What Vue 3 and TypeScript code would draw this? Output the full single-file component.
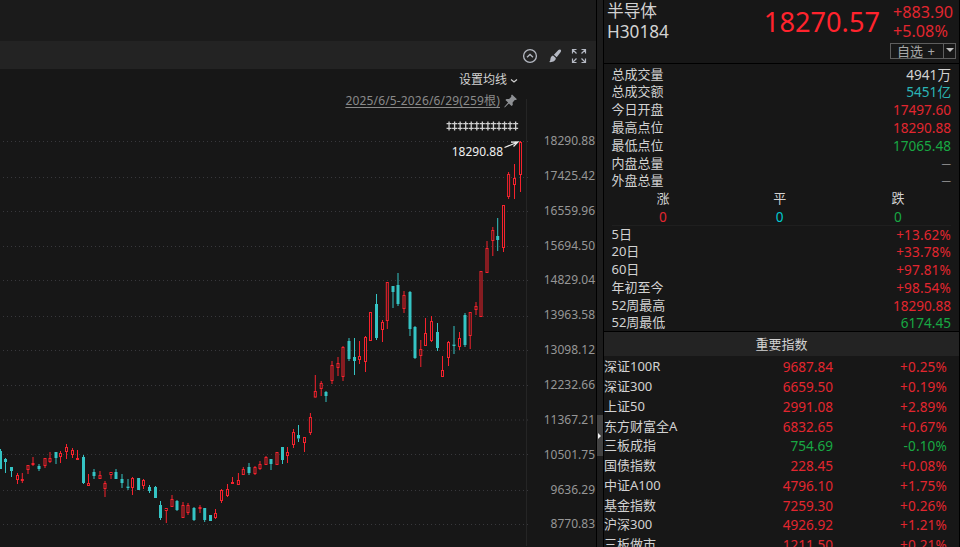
<template>
  <div class="terminal">
    <section class="chart">
      <div class="chart-top"></div>
      <div class="toolbar">
        <svg class="tool" width="16" height="16" viewBox="0 0 16 16">
          <circle cx="8" cy="8" r="6.4" />
          <path d="M5 9.2 8 6.4l3 2.8" />
        </svg>
        <svg class="tool brush" width="16" height="16" viewBox="0 0 16 16">
          <path d="M13.2 1.500c1.200.6 1.100 1.600.5 2.500L9.700 9.200 6.900 6.700l4.500-4.600c.6-.6 1.200-.9 1.800-.6z" />
          <path d="M6 7.500 8.800 10c.2 2.600-2.800 4.500-6.800 4.100 1.200-.7 1.200-1.700 1.400-3.200C3.600 9.200 4.500 7.800 6 7.500z" />
        </svg>
        <svg class="tool corners" width="16" height="16" viewBox="0 0 16 16">
          <path d="M1.500 5.500v-4h4M1.500 1.500l4 4M10.500 1.500h4v4M14.500 1.500l-4 4M1.500 10.500v4h4M1.500 14.500l4-4M10.500 14.500h4v-4M14.500 14.500l-4-4" />
        </svg>
      </div>
      <div class="plot">
        <svg class="candles" width="596" height="478" viewBox="0 69 596 478">
          <line v-for="tick in ticks" :key="tick.y" class="grid" x1="3" x2="530" :y1="tick.y" :y2="tick.y" />
          <line class="edge" x1="526.5" x2="526.5" y1="99" y2="546" />
          <g v-for="c in candles" :key="c[0]" :class="c[5] ? 'up' : 'down'">
            <line v-if="c[1] < c[2]" :x1="c[0]" :x2="c[0]" :y1="c[1]" :y2="c[2]" />
            <line v-if="c[4] > c[3]" :x1="c[0]" :x2="c[0]" :y1="c[3]" :y2="c[4]" />
            <rect v-if="c[5]" :x="c[0] - 1" :y="c[2] + 0.5" width="2" :height="Math.max(c[3] - c[2] - 1, 1)" />
            <rect v-else :x="c[0] - 1.5" :y="c[2]" width="3" :height="c[3] - c[2]" />
          </g>
          <path
            v-for="n in 13"
            :key="n"
            class="marker"
            :transform="`translate(${443.5 + n * 5.55} 126)`"
            d="M0-4.500v9M-2.500-2.300h5M-2.500 2.300h5"
          />
          <path class="pointer" d="M504.500 147.500 518 142M511 142.200l7-.2-4.500 4.500" />
        </svg>
        <div class="ma-setting">
          设置均线
          <svg width="8" height="6" viewBox="0 0 8 6"><path d="M1 1.500 4 4l3-2.500" /></svg>
        </div>
        <div class="range">
          <span>2025/6/5-2026/6/29(259根)</span>
          <svg width="13" height="14" viewBox="0 0 13 14">
            <path d="M8 .5l5 4.800-1.300.8-.9-.2-2.200 2.600.2 2.400-1.300 1.100L4.900 9.400.8 13.500.2 13l3.900-4.500L1.400 6l1.100-1.100 2.600.1L7.300 2.800 7.100 1.500z" />
          </svg>
        </div>
        <div class="peak">18290.88</div>
        <div class="axis">
          <span v-for="tick in ticks" :key="tick.label">{{ tick.label }}</span>
        </div>
      </div>
    </section>

    <div class="splitter"><div class="handle"></div></div>

    <aside class="panel">
      <header class="quote">
        <div class="name">
          <div>半导体</div>
          <div class="code">H30184</div>
        </div>
        <div class="price">18270.57</div>
        <div class="change">
          <div>+883.90</div>
          <div>+5.08%</div>
          <div class="watch"><span class="watch-text">自选 <i>+</i></span><span class="drop"></span></div>
        </div>
      </header>

      <div class="stats">
        <div v-for="row in stats" :key="row.label" class="stat">
          <span>{{ row.label }}</span>
          <span :class="['num', row.tone]">{{ row.value }}</span>
        </div>
        <div class="breadth">
          <div v-for="item in breadth" :key="item.label">
            <div>{{ item.label }}</div>
            <div :class="['num', item.tone]">0</div>
          </div>
        </div>
        <div v-for="row in periods" :key="row.label" class="stat">
          <span>{{ row.label }}</span>
          <span :class="['num', row.tone, { pct: row.value.endsWith('%') }]">{{ row.value }}</span>
        </div>
      </div>

      <div class="index-title">重要指数</div>
      <div class="indices">
        <div v-for="row in indices" :key="row.name" class="index-row">
          <span>{{ row.name }}</span>
          <span :class="['num', row.pct[0] === '-' ? 'green' : 'red']">{{ row.price }}</span>
          <span :class="['num', 'pct', row.pct[0] === '-' ? 'green' : 'red']">{{ row.pct }}</span>
        </div>
      </div>
    </aside>
  </div>
</template>

<script setup lang="ts">
interface Stat {
  label: string
  value: string
  tone: string
}

// x, high, body top, body bottom, low, rising
type Candle = [number, number, number, number, number, number]

const ticks = [
  { label: '18290.88', y: 141.5 },
  { label: '17425.42', y: 177.5 },
  { label: '16559.96', y: 211.5 },
  { label: '15694.50', y: 246.5 },
  { label: '14829.04', y: 280.5 },
  { label: '13963.58', y: 316.5 },
  { label: '13098.12', y: 350.5 },
  { label: '12232.66', y: 385.5 },
  { label: '11367.21', y: 420 },
  { label: '10501.75', y: 454.5 },
  { label: '9636.29', y: 490.5 },
  { label: '8770.83', y: 524.5 }
]

const candles: Candle[] = [
  [0.5, 449, 451, 469, 469, 0],
  [5.5, 458, 459, 462, 473, 0],
  [11.5, 467, 467, 471, 477, 0],
  [17.5, 473, 475, 480, 484, 1],
  [22.3, 473, 479, 481, 483, 1],
  [28, 465, 465, 470, 474, 1],
  [33, 457, 463, 465, 466, 1],
  [39, 464, 466, 469, 471, 0],
  [45, 458, 458, 466, 468, 1],
  [50, 452, 458, 462, 463, 1],
  [56, 452, 452, 458, 464, 0],
  [60.5, 451, 453, 457, 463, 1],
  [66.5, 444, 447, 452, 459, 1],
  [72.5, 448, 450, 455, 458, 1],
  [77.5, 450, 458, 460, 460, 1],
  [83.5, 455, 457, 483, 484, 0],
  [88.5, 474, 483, 486, 486, 1],
  [94, 469, 472, 476, 479, 0],
  [100, 471, 475, 479, 479, 1],
  [105, 481, 483, 489, 497, 1],
  [111, 472, 472, 475, 479, 1],
  [116, 469, 472, 479, 479, 0],
  [122, 474, 479, 483, 488, 0],
  [128, 479, 486.5, 488, 490, 0],
  [132.5, 477, 478, 488, 495, 1],
  [138.6, 478, 478, 490, 490, 0],
  [143.5, 479, 480, 486, 489, 1],
  [149.5, 485, 487, 491, 493, 0],
  [155.5, 486, 487, 498, 498, 0],
  [160.5, 501, 505, 518, 520, 0],
  [166.3, 508, 508, 511, 523, 1],
  [172, 495, 499, 507, 507, 1],
  [177, 500, 501, 510, 511, 0],
  [183, 502, 505, 518, 518, 1],
  [188, 503, 505, 513, 515, 1],
  [194, 507, 508, 520, 521, 0],
  [200, 505, 507, 509, 513, 1],
  [204.7, 508, 508, 520, 522, 0],
  [210.5, 515, 515, 521, 521, 0],
  [215.5, 509, 513, 518, 519, 1],
  [221.5, 489, 490, 501, 503, 1],
  [227.5, 484, 489, 496, 497, 1],
  [232.5, 477, 482, 484, 484, 1],
  [238.4, 473, 480, 485, 485, 1],
  [243.3, 467, 469, 475, 475, 1],
  [249, 463, 467, 473, 475, 0],
  [255, 466, 467, 474, 475, 1],
  [260, 461, 464, 469, 470, 1],
  [266, 456, 457, 465, 465, 1],
  [271, 459, 459, 464, 470, 0],
  [277, 452, 452, 465, 465, 1],
  [282.5, 447, 447, 460, 464, 0],
  [287.5, 447, 452, 456, 463, 1],
  [293.5, 429, 432, 445, 448, 1],
  [298.5, 425, 435, 438.5, 442, 0],
  [304.5, 437, 437, 443, 452, 1],
  [310.4, 413, 417, 433, 435, 1],
  [315.3, 375, 391, 397.5, 398, 1],
  [321.2, 381, 383, 389, 396, 1],
  [326, 391, 392, 396, 402, 0],
  [332, 361, 365, 381, 384, 1],
  [338, 357, 363, 368, 376, 1],
  [343, 346, 347, 377, 381, 1],
  [349, 338, 341, 359, 361, 0],
  [354.5, 338, 357, 361, 375, 0],
  [359.5, 341, 356, 360, 364, 1],
  [365.5, 336, 337, 362, 372, 1],
  [370.5, 312, 312, 341, 341, 1],
  [376.5, 294, 304, 338, 340, 0],
  [382.5, 320, 322, 330, 342, 1],
  [387.3, 282, 282, 321, 329, 1],
  [393, 286, 286, 292, 308, 0],
  [398, 273, 285, 304, 306, 0],
  [404, 291, 295, 309, 313, 1],
  [410, 291, 292, 329, 336, 0],
  [415, 326, 327, 358, 359, 0],
  [420.8, 340, 349, 356, 367, 1],
  [425.5, 318, 333, 346, 346, 1],
  [431.5, 316, 321, 341, 342, 1],
  [437.5, 323, 332, 348, 351, 0],
  [442.5, 356, 370, 377, 377, 1],
  [448.5, 341, 342, 358, 366, 1],
  [454, 326, 344.5, 346, 354, 0],
  [459.5, 332, 338, 347, 350, 1],
  [465, 313, 315, 345, 347, 0],
  [470.2, 312, 312, 336, 349, 1],
  [476, 302, 306, 310, 315, 1],
  [481, 271, 271, 317, 317, 1],
  [487, 241, 248, 273, 273, 1],
  [492.8, 227, 230, 241, 256, 1],
  [497.7, 218, 236, 240, 251, 0],
  [503.5, 205, 205, 248, 252, 1],
  [508.6, 172, 174, 197, 199, 1],
  [514.5, 164, 178, 185, 199, 1],
  [520.5, 141, 142, 175, 192, 1]
]

const stats: Stat[] = [
  { label: '总成交量', value: '4941万', tone: '' },
  { label: '总成交额', value: '5451亿', tone: 'teal' },
  { label: '今日开盘', value: '17497.60', tone: 'red' },
  { label: '最高点位', value: '18290.88', tone: 'red' },
  { label: '最低点位', value: '17065.48', tone: 'green' },
  { label: '内盘总量', value: '—', tone: 'dash' },
  { label: '外盘总量', value: '—', tone: 'dash' }
]

const breadth = [
  { label: '涨', tone: 'red' },
  { label: '平', tone: 'cyan' },
  { label: '跌', tone: 'green' }
]

const periods: Stat[] = [
  { label: '5日', value: '+13.62%', tone: 'red' },
  { label: '20日', value: '+33.78%', tone: 'red' },
  { label: '60日', value: '+97.81%', tone: 'red' },
  { label: '年初至今', value: '+98.54%', tone: 'red' },
  { label: '52周最高', value: '18290.88', tone: 'red' },
  { label: '52周最低', value: '6174.45', tone: 'green' }
]

const indices = [
  { name: '深证100R', price: '9687.84', pct: '+0.25%' },
  { name: '深证300', price: '6659.50', pct: '+0.19%' },
  { name: '上证50', price: '2991.08', pct: '+2.89%' },
  { name: '东方财富全A', price: '6832.65', pct: '+0.67%' },
  { name: '三板成指', price: '754.69', pct: '-0.10%' },
  { name: '国债指数', price: '228.45', pct: '+0.08%' },
  { name: '中证A100', price: '4796.10', pct: '+1.75%' },
  { name: '基金指数', price: '7259.30', pct: '+0.26%' },
  { name: '沪深300', price: '4926.92', pct: '+1.21%' },
  { name: '三板做市', price: '1211.50', pct: '+0.21%' }
]
</script>

<style>
body {
  background: #171717;
  overflow: hidden;
}
</style>

<style scoped>
.terminal {
  display: flex;
  width: 960px;
  height: 547px;
  overflow: hidden;
  background: #171717;
  color: #d2d2d2;
  font-family: "Noto Sans", "Noto Sans CJK SC", sans-serif;
  font-size: 13px;
}

.chart {
  width: 596px;
  display: flex;
  flex-direction: column;
}

.chart-top {
  height: 41px;
  background: #1b1b1b;
}

.toolbar {
  height: 28px;
  box-sizing: border-box;
  padding: 2px 9px 0 0;
  display: flex;
  align-items: center;
  justify-content: flex-end;
  gap: 8.5px;
  background: #232323;
}

.tool {
  fill: none;
  stroke: #b4b8c2;
  stroke-width: 1.3;
}

.brush {
  fill: #b4b8c2;
  stroke: none;
}

.corners {
  stroke-width: 1.2;
}

.plot {
  position: relative;
  height: 478px;
}

.candles {
  display: block;
}

.grid {
  stroke: #38383c;
  stroke-dasharray: 1 3;
}

.edge {
  stroke: #252525;
}

.up {
  stroke: #f5222d;
  fill: #171717;
}

.down line {
  stroke: #35c4c4;
}

.down rect {
  fill: #35c4c4;
}

.marker {
  stroke: #cfcfcf;
  stroke-width: 1.3;
}

.pointer {
  stroke: #ececec;
  stroke-width: 1.2;
  fill: none;
}

.ma-setting,
.range,
.peak,
.axis {
  position: absolute;
}

.ma-setting {
  top: 1px;
  right: 78px;
  line-height: 20px;
  font-size: 12px;
}

.ma-setting svg {
  fill: none;
  stroke: #cfcfcf;
  stroke-width: 1.2;
}

.range {
  top: 22px;
  right: 79px;
  display: flex;
  align-items: center;
  gap: 4px;
  color: #8a8a8a;
  font-size: 12px;
  line-height: 20px;
}

.range span {
  letter-spacing: 0.16px;
  text-decoration: underline;
  text-underline-offset: 2px;
}

.range svg {
  fill: #8e9094;
}

.peak {
  top: 73px;
  right: 93px;
  color: #f0f0f0;
  font-size: 12px;
  line-height: 20px;
}

.axis {
  top: 55px;
  right: 1px;
  display: flex;
  flex-direction: column;
  color: #969696;
  font-size: 12px;
  text-align: right;
}

.axis span {
  height: 34.86px;
  line-height: 34.86px;
}

.splitter {
  width: 6px;
  background: #1c1c1c;
  border-left: 1px solid #000;
  border-right: 1px solid #000;
}

.handle {
  height: 41px;
  margin-top: 415px;
  display: flex;
  align-items: center;
  background: #424242;
}

.handle::before {
  content: "";
  margin-left: 1px;
  border: 3px solid transparent;
  border-left-color: #f2f2f2;
  border-right: 0;
}

.panel {
  width: 355px;
  border-right: 1px solid #000;
}

.quote {
  height: 64px;
  box-sizing: border-box;
  display: flex;
  border-bottom: 1px solid #000;
}

.name {
  width: 143px;
  padding-left: 3px;
  font-size: 16.7px;
  line-height: 21px;
}

.code {
  font-size: 17.2px;
}

.price {
  width: 130px;
  text-align: right;
  font-size: 27.2px;
  line-height: 43px;
  color: #ff232d;
}

.change {
  width: 79px;
  padding: 3px 0 0 13px;
  font-size: 16.2px;
  line-height: 19px;
  box-sizing: border-box;
  color: #e2262f;
}

.watch {
  width: 66px;
  height: 16px;
  margin: 2px 0 0 -3px;
  box-sizing: border-box;
  border: 1px solid #5e5e5e;
  display: flex;
  color: #a8a8a8;
  font-size: 13px;
  line-height: 14px;
}

.watch-text {
  width: 53px;
  padding-left: 6px;
  box-sizing: border-box;
  border-right: 1px solid #5e5e5e;
  white-space: nowrap;
}

.watch-text i {
  font-style: normal;
  margin-left: 1px;
}

.drop {
  margin: 4px 0 0 2px;
  height: 0;
  border: 4px solid transparent;
  border-top-color: #c0c0c0;
  border-bottom: 0;
}

.stats {
  height: 268px;
  padding: 1.7px 8px 0 7.5px;
  box-sizing: border-box;
  border-bottom: 1px solid #000;
}

.stat {
  display: flex;
  justify-content: space-between;
  height: 17.78px;
  line-height: 17.78px;
}

.num {
  font-size: 13.6px;
}

.pct {
  letter-spacing: 0.15px;
}

.dash {
  font-size: 9.5px;
}

.breadth {
  display: grid;
  grid-template-columns: 103px 1fr 106px;
  height: 35.56px;
  line-height: 17.78px;
  text-align: center;
  box-shadow: inset 0 -1px #1f1f1f;
}

.red {
  color: #e2262f;
}

.green {
  color: #18a843;
}

.teal {
  color: #2bb5b5;
}

.cyan {
  color: #00c8d0;
}

.index-title {
  height: 24px;
  line-height: 25px;
  text-align: center;
  background: #232323;
}

.indices {
  padding-top: 1.4px;
}

.index-row {
  display: grid;
  grid-template-columns: 129px 100px 114px;
  height: 19.75px;
  line-height: 19.75px;
}

.index-row .num {
  text-align: right;
}
</style>
